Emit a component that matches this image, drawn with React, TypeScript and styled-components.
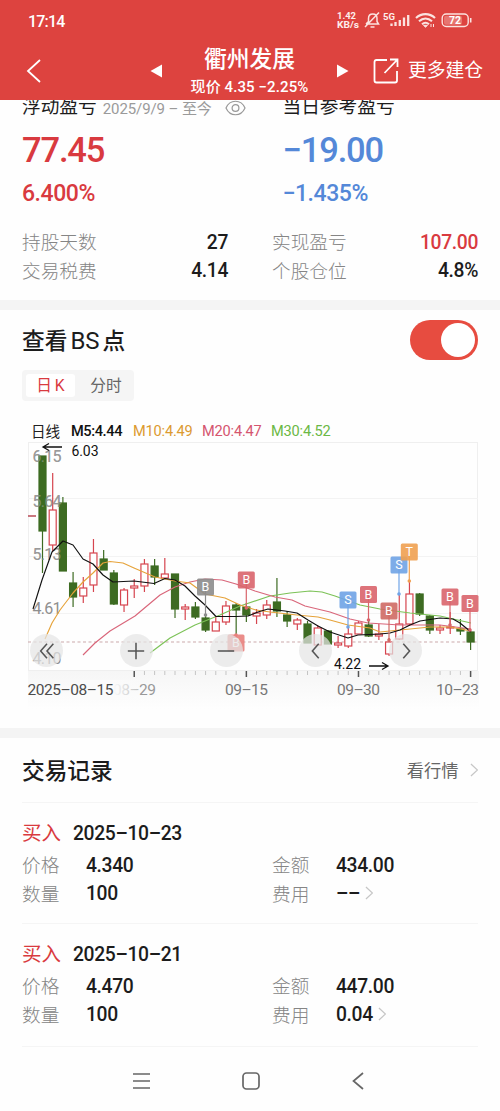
import React from "react";
import styled, { createGlobalStyle } from "styled-components";

const GlobalStyle = createGlobalStyle`
  * { box-sizing: border-box; }
  body {
    margin: 0;
    background: #fefefe;
    color: #1c1c1c;
    font-family: Roboto, "Noto Sans CJK SC", sans-serif;
  }
  svg { display: block; flex: none; }
`;

const RED = "#d93a3f";
const BLUE = "#5488d8";

const Screen = styled.div`
  width: 500px;
  height: 1111px;
  overflow: hidden;
  display: flex;
  flex-direction: column;
`;

const Header = styled.header`
  position: relative;
  z-index: 1;
  height: 100px;
  flex: none;
  background: #dd433f;
  color: #fff;
`;

const StatusBar = styled.div`
  height: 42px;
  padding: 0 28px;
  display: flex;
  align-items: center;
  justify-content: space-between;
`;

const Clock = styled.span`
  font-size: 16px;
  font-weight: 500;
  letter-spacing: -0.8px;
`;

const TitleBar = styled.div`
  height: 58px;
  padding: 0 17px 0 26px;
  display: grid;
  grid-template-columns: 123px 14px 1fr 14px 133px;
  align-items: center;
`;

const TitleBlock = styled.div`
  display: flex;
  flex-direction: column;
  align-items: center;
`;

const Title = styled.h1`
  margin: 0;
  font-size: 22.8px;
  font-weight: 500;
  line-height: 31px;
`;

const Quote = styled.div`
  margin-bottom: -1px;
  font-size: 15px;
  font-weight: 500;
  line-height: 25px;
  letter-spacing: 0.1px;
  white-space: nowrap;
`;

const AddPosition = styled.div`
  display: flex;
  align-items: center;
  justify-content: flex-end;
  gap: 9px;
  font-size: 18.8px;
  line-height: 26px;
  padding-bottom: 1px;
  white-space: nowrap;
`;

const Summary = styled.section`
  height: 200px;
  flex: none;
  padding: 0 22px;
`;

const Columns = styled.div<{ $h: number }>`
  height: ${(p) => p.$h}px;
  display: grid;
  grid-template-columns: 260.5px 1fr;
  align-items: center;
`;

const Caption = styled.div`
  display: flex;
  align-items: center;
  font-size: 18.7px;
  line-height: 27px;
  white-space: nowrap;
  margin-top: -12px;
`;

const Period = styled.span`
  margin: 3px 13px 0 6px;
  font-size: 15px;
  letter-spacing: -0.1px;
  color: #9a9a9a;
`;

const BigValue = styled.div<{ $color: string }>`
  font-size: 34.5px;
  font-weight: 500;
  letter-spacing: -1.15px;
  color: ${(p) => p.$color};
`;

const Percent = styled.div<{ $color: string }>`
  font-size: 23px;
  letter-spacing: -0.45px;
  font-weight: 500;
  color: ${(p) => p.$color};
`;

const Facts = styled.div`
  display: grid;
  grid-template-columns: 206px 206px;
  column-gap: 44px;
  grid-auto-rows: 28.5px;
  margin-top: 14px;
`;

const Fact = styled.div`
  display: flex;
  align-items: center;
  justify-content: space-between;
`;

const Label = styled.span`
  padding-bottom: 1px;
  font-size: 18.7px;
  font-weight: 300;
  color: #858585;
  white-space: nowrap;
`;

const Value = styled.span<{ $color?: string }>`
  padding-top: 2px;
  font-size: 19.3px;
  font-weight: 500;
  letter-spacing: -0.35px;
  color: ${(p) => p.$color ?? "#1c1c1c"};
`;

const Divider = styled.div`
  height: 10px;
  flex: none;
  background: #f4f4f4;
`;

const ChartSection = styled.section`
  height: 418px;
  flex: none;
`;

const SectionHead = styled.div<{ $h: number }>`
  height: ${(p) => p.$h}px;
  padding: 0 22px;
  display: flex;
  align-items: center;
  justify-content: space-between;
`;

const SectionTitle = styled.h2`
  margin: 0;
  padding-bottom: 2px;
  font-size: 22.7px;
  font-weight: 500;
  white-space: nowrap;
`;

const Latin = styled.span`
  margin: 0 3px 0 3px;
  font-size: 24px;
  font-weight: 400;
`;

const Switch = styled.div`
  width: 68px;
  height: 40px;
  padding: 3px;
  border-radius: 20px;
  background: #e74c40;
  display: flex;
  justify-content: flex-end;
`;

const Knob = styled.div`
  width: 34px;
  height: 34px;
  border-radius: 50%;
  background: #fff;
`;

const Tabs = styled.div`
  width: 112px;
  height: 31px;
  margin-left: 22px;
  padding: 4px;
  border-radius: 4px;
  background: #f5f5f5;
  display: flex;
`;

const Tab = styled.div<{ $active?: boolean }>`
  width: ${(p) => (p.$active ? 49 : 55)}px;
  padding-left: ${(p) => (p.$active ? 0 : 7)}px;
  border-radius: 3px;
  background: ${(p) => (p.$active ? "#fff" : "transparent")};
  color: ${(p) => (p.$active ? RED : "#666")};
  font-size: 15.7px;
  line-height: 23px;
  text-align: center;
  word-spacing: -1px;
  white-space: nowrap;
`;

const Legend = styled.div`
  margin-top: 17px;
  height: 24px;
  padding-left: 31px;
  display: flex;
  align-items: center;
  font-size: 14.6px;
`;

const LegendItem = styled.span<{ $color: string; $w: number; $strong?: boolean }>`
  width: ${(p) => p.$w}px;
  flex: none;
  padding-top: ${(p) => (p.$w < 45 ? 0 : 2)}px;
  color: ${(p) => p.$color};
  font-weight: ${(p) => (p.$strong ? 500 : 400)};
  letter-spacing: ${(p) => (p.$strong ? -0.4 : -0.2)}px;
  white-space: nowrap;
`;

const ChartArea = styled.div`
  position: relative;
  width: 500px;
  height: 270px;
`;

const Controls = styled.div`
  position: absolute;
  left: 30px;
  right: 78px;
  top: 192px;
  display: flex;
  justify-content: space-between;
`;

const Control = styled.div`
  width: 33px;
  height: 33px;
  border-radius: 50%;
  background: rgba(228, 228, 228, 0.72);
  display: flex;
  align-items: center;
  justify-content: center;
`;

const Records = styled.section`
  height: 308px;
  flex: none;
`;

const More = styled.div`
  display: flex;
  align-items: center;
  gap: 11px;
  font-size: 17.3px;
  padding-bottom: 1px;
  color: #666;
`;

const Record = styled.article`
  height: 121px;
  margin: 0 22px;
  padding-top: 13px;
  border-top: 1px solid #f5f5f5;
`;

const RecordHead = styled.div`
  height: 33px;
  display: flex;
  align-items: center;
  gap: 12px;
`;

const Side = styled.span`
  padding-bottom: 2px;
  font-size: 19.5px;
  color: ${RED};
`;

const RecordGrid = styled.div`
  padding-top: 1px;
  display: grid;
  grid-template-columns: 250px 206px;
  grid-auto-rows: 28.5px;
`;

const RecordCell = styled.div`
  display: grid;
  grid-template-columns: 64px auto 1fr;
  align-items: center;
`;

const ChevronSlot = styled.span`
  padding-left: 5px;
`;

const NavBar = styled.nav`
  height: 65px;
  margin: 0 22px;
  border-top: 1px solid #f5f5f5;
  padding: 3px 114px 0 111px;
  display: flex;
  align-items: center;
  justify-content: space-between;
`;

const STEP = 10.193;
const cx = (i: number) => 42.5 + i * STEP;

// [high, body top, body bottom, low, rising]
const candles: [number, number, number, number, 0 | 1][] = [
  [456, 456, 531, 573, 0],
  [473, 510, 545, 551, 1],
  [497, 503, 571, 571, 0],
  [572, 583, 597, 607, 0],
  [577, 588, 596, 603, 1],
  [539, 553, 585, 592, 1],
  [550, 559, 570, 570, 0],
  [570, 573, 604, 605, 0],
  [588, 590, 605, 612, 1],
  [579, 586, 588, 598, 1],
  [559, 564, 586, 592, 1],
  [559, 566, 577, 585, 0],
  [558, 574, 578, 579, 1],
  [574, 574, 609, 618, 0],
  [604, 607, 609, 620, 1],
  [602, 607, 617, 619, 0],
  [614, 618, 630, 632, 0],
  [617, 622, 631, 631, 1],
  [601, 606, 622, 625, 1],
  [603, 605, 610, 634, 0],
  [603, 607, 615, 622, 0],
  [609, 613, 616, 624, 1],
  [600, 605, 615, 619, 1],
  [578, 602, 611, 617, 0],
  [611, 615, 621, 627, 0],
  [618, 620, 624, 630, 1],
  [621, 624, 643, 643, 0],
  [625, 628, 645, 645, 1],
  [630, 631, 644, 644, 0],
  [636, 643, 645, 648, 1],
  [628, 634, 646, 648, 1],
  [621, 623, 634, 634, 1],
  [620, 625, 636, 637, 0],
  [624, 634, 636, 640, 1],
  [638, 642, 654, 656, 1],
  [594, 624, 639, 640, 1],
  [580, 594, 624, 626, 1],
  [593, 594, 614, 616, 0],
  [615, 616, 630, 634, 0],
  [625, 628, 630, 634, 1],
  [612, 627, 628, 634, 1],
  [619, 629, 631, 635, 0],
  [631, 632, 642, 650, 0],
];

const averages = [
  {
    color: "#7cc257",
    points: "150,653 170,638 195,625 220,615 240,606 270,596 290,593 310,591 322,592 335,596 360,605 380,609 410,613 440,616 471,623",
  },
  {
    color: "#d9667a",
    points: "83,655 95,643 110,631 135,616 160,595 175,587 190,582 205,579 222,580 236,584 255,591 275,597 292,600 305,606 330,612 350,619 368,623 400,625 440,625 471,629",
  },
  {
    color: "#e6a33a",
    points: "45,639 52,623 60,610 73,593 83,582 93,573 103,563 110,561.5 123,563 134,568 155,577 175,581 190,583 205,594 225,598 240,605 256,610 270,612 297,615 318,617 330,620 348,625 370,628 380,632 410,629 430,627 450,627 471,631",
  },
  {
    color: "#111",
    points: "33,609 42,580 52,552 63,541 73,545 83,559 93,564 103,575 113,582 134,581 154,583.5 165,578.5 175,580 185,586 195,596 205,605 216,616.5 236,616.5 248,616 258,612 268,609 285,611 297,613 308,620 318,626 330,632 348,638 358,635 380,634 390,633 400,630 410,625 420,621 440,618 453,619 460,623 471,632",
  },
];

const pins = [
  { x: 205.5, y: 587, to: 615, text: "B", color: "#8c8c8c" },
  { x: 246.3, y: 580, to: 608, text: "B", color: "#d9646b" },
  { x: 236, y: 643, to: 635, text: "B", color: "#e8807c" },
  { x: 348, y: 600, to: 627, text: "S", color: "#6fa3e6" },
  { x: 368.5, y: 594.5, to: 620, text: "B", color: "#d9646b" },
  { x: 389, y: 611, to: 640, text: "B", color: "#cf6a64" },
  { x: 399, y: 565, to: 594, text: "S", color: "#6fa3e6" },
  { x: 409.3, y: 552, to: 581, text: "T", color: "#f0a050" },
  { x: 450, y: 597, to: 625, text: "B", color: "#d9646b" },
  { x: 470, y: 603.5, to: 630, text: "B", color: "#d9646b" },
];

function KLineChart() {
  return (
    <svg width="500" height="270" viewBox="0 442 500 270" overflow="visible" fontFamily="Roboto, sans-serif">
      <defs>
        <linearGradient id="footer" x1="0" x2="0" y1="0" y2="1">
          <stop offset="0" stopColor="#f6f6f6" />
          <stop offset="1" stopColor="#fefefe" />
        </linearGradient>
        <linearGradient id="dateFade" x1="0" x2="1" y1="0" y2="0">
          <stop offset="0.55" stopColor="#fbfbfb" stopOpacity="1" />
          <stop offset="1" stopColor="#fbfbfb" stopOpacity="0.35" />
        </linearGradient>
      </defs>
      <rect x="28" y="671" width="451" height="38" fill="url(#footer)" />
      <g stroke="#efefef" fill="none">
        <rect x="28.5" y="442.5" width="449" height="228" />
        <path d="M28 498.5H478M28 556.5H478M28 613.5H478" stroke="#f3f3f3" />
      </g>
      <path d="M28 642H478" stroke="#cba9ab" strokeDasharray="3 2.5" strokeWidth="1" />
      <path d="M28 516H36" stroke="#b84a56" strokeWidth="1.5" />

      <g fill="#8f8f8f" fontSize="16" letterSpacing="-0.7">
        <text x="32.5" y="462">6.15</text>
        <text x="32.5" y="507">5.64</text>
        <text x="32.5" y="560">5.13</text>
        <text x="32.5" y="614">4.61</text>
        <text x="32.5" y="664">4.10</text>
      </g>

      {candles.map(([hi, top, bottom, lo, up], i) => {
        const x = cx(i);
        const color = up ? "#d6454f" : "#3d6b22";
        return (
          <g key={i} stroke={color} strokeWidth="1.2">
            <path d={`M${x} ${hi}V${top}M${x} ${bottom}V${lo}`} />
            <rect
              x={x - 3.5}
              y={top}
              width="7"
              height={bottom - top}
              fill={up ? "#fff" : color}
            />
          </g>
        );
      })}

      <g fill="#a2a2a2" fillOpacity="0.6" fontSize="16" letterSpacing="-0.7">
        <text x="32.5" y="462">6.15</text>
        <text x="32.5" y="507">5.64</text>
        <text x="32.5" y="560">5.13</text>
      </g>

      {averages.map((a) => (
        <polyline key={a.color} points={a.points} fill="none" stroke={a.color} strokeWidth="1.15" strokeLinejoin="round" />
      ))}

      {pins.map((p) => (
        <g key={p.x}>
          <path d={`M${p.x} ${p.y}V${p.to}`} stroke={p.color} strokeWidth="1.2" />
          <circle cx={p.x} cy={p.to} r="1.8" fill={p.color} />
          <rect x={p.x - 8.5} y={p.y - 8.5} width="17" height="17" rx="1.5" fill={p.color} fillOpacity="0.9" />
          <text x={p.x} y={p.y + 4.4} fill="#fff" fontSize="12.5" textAnchor="middle">
            {p.text}
          </text>
        </g>
      ))}

      <g stroke="#111" strokeWidth="1.3" fill="none">
        <path d="M62 447H43M49 443.5L43 447L49 450.5" />
        <path d="M369 666H388M382 662.5L388 666L382 669.5" />
      </g>
      <g fill="#111" fontSize="14" letterSpacing="-0.1">
        <text x="71.5" y="456">6.03</text>
        <text x="334" y="669">4.22</text>
      </g>

      {Array.from({ length: 34 }, (_, k) => k + 9).map((i) => {
        const major = (i - 9) % 11 === 0;
        return (
          <path
            key={i}
            d={`M${cx(i)} 671V${major ? 677 : 675}`}
            stroke={major ? "#555" : "#c4c4c4"}
            strokeWidth={major ? 1.5 : 1}
          />
        );
      })}

      <g fill="#777" fontSize="15.5" letterSpacing="0" fontWeight="400">
        <text x="113" y="695" textLength="43" fill="#999">08–29</text>
        <text x="225" y="695" textLength="43">09–15</text>
        <text x="337" y="695" textLength="43">09–30</text>
        <text x="436" y="695" textLength="43">10–23</text>
        <rect x="80" y="680" width="60" height="20" fill="url(#dateFade)" />
        <text x="27.5" y="695" textLength="86" fill="#4c4c4c">2025–08–15</text>
      </g>
    </svg>
  );
}

const controlIcons = [
  "M15 4L8 12L15 20M22 4L15 12L22 20",
  "M12 3V21M3 12H21",
  "M3 12H21",
  "M15 4L8 12L15 20",
  "M9 4L16 12L9 20",
];

function Chevron({ size = 14 }: { size?: number }) {
  return (
    <svg width={size * 0.6} height={size} viewBox="0 0 9 15" fill="none" stroke="#c6c6c6" strokeWidth="1.3">
      <path d="M1 1L8 7.5L1 14" />
    </svg>
  );
}

function StatusIcons() {
  return (
    <svg width="137" height="20" viewBox="335 12 137 20" fill="none" stroke="#fbe3e0" fontFamily="Roboto, sans-serif">
      <g fill="#fdeeec" stroke="none" fontWeight="700">
        <text x="337" y="20" fontSize="9.8" textLength="19" lengthAdjust="spacingAndGlyphs">1.42</text>
        <text x="337" y="29" fontSize="9.8" textLength="22" lengthAdjust="spacingAndGlyphs">KB/s</text>
        <text x="383" y="20.5" fontSize="9.5" textLength="12" lengthAdjust="spacingAndGlyphs">5G</text>
      </g>
      <path d="M366 25H378.500L377 22.500V19.500C377 13.500 368.500 13.500 368.500 19.500V22.500L366 25M370.500 28H374.500M379 13.500L365 28" strokeWidth="1.5" />
      <path d="M391.500 27V24.500M395.500 27V23M399.800 27V21M404 27V18.500M408.200 27V16" strokeWidth="2.300" />
      <path d="M416 19C421.500 13.800 429.500 13.800 435 19M419 22.300C423 18.700 428 18.700 432 22.300M422 25.300C424.300 23.300 426.700 23.300 429 25.300" strokeWidth="2.100" />
      <path d="M423.500 26.300L425.500 28.200L427.500 26.300Z" fill="#fbe3e0" />
      <path d="M431 25V28M433.500 25V28" strokeWidth="1" />
      <rect x="442.200" y="15" width="26" height="12.500" rx="4" strokeWidth="1.400" />
      <rect x="444" y="16.800" width="18" height="9" rx="2" fill="#ef9e99" fillOpacity="0.55" stroke="none" />
      <path d="M470.700 19V23.500" strokeWidth="1.600" />
      <text x="455" y="25.200" fontSize="10.500" fontWeight="700" textAnchor="middle" fill="#fff" stroke="none">72</text>
    </svg>
  );
}

const facts = [
  { label: "持股天数", value: "27" },
  { label: "实现盈亏", value: "107.00", color: RED },
  { label: "交易税费", value: "4.14" },
  { label: "个股仓位", value: "4.8%" },
];

const records = [
  { date: "2025–10–23", price: "4.340", amount: "434.00", count: "100", fee: "––" },
  { date: "2025–10–21", price: "4.470", amount: "447.00", count: "100", fee: "0.04" },
];

export default function App() {
  return (
    <Screen>
      <GlobalStyle />
      <Header>
        <StatusBar>
          <Clock>17:14</Clock>
          <StatusIcons />
        </StatusBar>
        <TitleBar>
          <svg width="16" height="26" viewBox="0 0 16 26" fill="none" stroke="#fff" strokeWidth="1.8">
            <path d="M14 2L2 13L14 24" />
          </svg>
          <svg width="14" height="14" viewBox="0 0 14 14" fill="#fff">
            <path d="M13 0.5L1.500 7L13 13.5Z" />
          </svg>
          <TitleBlock>
            <Title>衢州发展</Title>
            <Quote>现价 4.35 −2.25%</Quote>
          </TitleBlock>
          <svg width="14" height="14" viewBox="0 0 14 14" fill="#fff">
            <path d="M1 0.5L12.5 7L1 13.5Z" />
          </svg>
          <AddPosition>
            <svg width="26" height="26" viewBox="0 0 26 26" fill="none" stroke="#fff" strokeWidth="1.8">
              <path d="M14 2H3.5Q1.5 2 1.5 4V22.5Q1.5 24.5 3.5 24.5H22Q24 24.5 24 22.5V13" />
              <path d="M11.5 15L24 2M17 1.5H24.5V9" />
            </svg>
            更多建仓
          </AddPosition>
        </TitleBar>
      </Header>

      <Summary>
        <Columns $h={27}>
          <Caption>
            浮动盈亏
            <Period>2025/9/9 – 至今</Period>
            <svg width="21" height="16" viewBox="0 0 21 16" fill="none" stroke="#999" strokeWidth="1.2">
              <path d="M1 8C5 -1 16 -1 20 8C16 17 5 17 1 8Z" />
              <circle cx="10.5" cy="8" r="3.4" />
            </svg>
          </Caption>
          <Caption>当日参考盈亏</Caption>
        </Columns>
        <Columns $h={46}>
          <BigValue $color={RED}>77.45</BigValue>
          <BigValue $color={BLUE}>−19.00</BigValue>
        </Columns>
        <Columns $h={40}>
          <Percent $color={RED}>6.400%</Percent>
          <Percent $color={BLUE}>−1.435%</Percent>
        </Columns>
        <Facts>
          {facts.map((f) => (
            <Fact key={f.label}>
              <Label>{f.label}</Label>
              <Value $color={f.color}>{f.value}</Value>
            </Fact>
          ))}
        </Facts>
      </Summary>

      <Divider />

      <ChartSection>
        <SectionHead $h={60}>
          <SectionTitle>
            查看<Latin>BS</Latin>点
          </SectionTitle>
          <Switch>
            <Knob />
          </Switch>
        </SectionHead>
        <Tabs>
          <Tab $active>日 K</Tab>
          <Tab>分时</Tab>
        </Tabs>
        <Legend>
          <LegendItem $color="#222" $w={40}>日线</LegendItem>
          <LegendItem $color="#111" $w={62} $strong>M5:4.44</LegendItem>
          <LegendItem $color="#dc9a30" $w={69}>M10:4.49</LegendItem>
          <LegendItem $color="#d5556f" $w={69}>M20:4.47</LegendItem>
          <LegendItem $color="#6bb845" $w={69}>M30:4.52</LegendItem>
        </Legend>
        <ChartArea>
          <KLineChart />
          <Controls>
            {controlIcons.map((d, i) => (
              <Control key={i}>
                <svg
                  width="22"
                  height="20"
                  viewBox={i === 0 ? "4 1 22 22" : "1 1 22 22"}
                  fill="none"
                  stroke="#555"
                  strokeWidth="1.7"
                >
                  <path d={d} />
                </svg>
              </Control>
            ))}
          </Controls>
        </ChartArea>
      </ChartSection>

      <Divider />

      <Records>
        <SectionHead $h={64}>
          <SectionTitle>交易记录</SectionTitle>
          <More>
            看行情
            <Chevron size={14} />
          </More>
        </SectionHead>
        {records.map((r) => (
          <Record key={r.date}>
            <RecordHead>
              <Side>买入</Side>
              <Value>{r.date}</Value>
            </RecordHead>
            <RecordGrid>
              <RecordCell>
                <Label>价格</Label>
                <Value>{r.price}</Value>
              </RecordCell>
              <RecordCell>
                <Label>金额</Label>
                <Value>{r.amount}</Value>
              </RecordCell>
              <RecordCell>
                <Label>数量</Label>
                <Value>{r.count}</Value>
              </RecordCell>
              <RecordCell>
                <Label>费用</Label>
                <Value>{r.fee}</Value>
                <ChevronSlot>
                  <Chevron />
                </ChevronSlot>
              </RecordCell>
            </RecordGrid>
          </Record>
        ))}
      </Records>

      <NavBar>
        <svg width="17" height="18" viewBox="0 0 17 18" fill="none" stroke="#666" strokeWidth="1.7">
          <path d="M0 2H17M0 9H17M0 16H17" />
        </svg>
        <svg width="18" height="18" viewBox="0 0 18 18" fill="none" stroke="#666" strokeWidth="1.7">
          <rect x="1" y="1" width="16" height="16" rx="3.5" />
        </svg>
        <svg width="12" height="18" viewBox="0 0 12 18" fill="none" stroke="#666" strokeWidth="1.7">
          <path d="M11 1L1.5 9L11 17" />
        </svg>
      </NavBar>
    </Screen>
  );
}
